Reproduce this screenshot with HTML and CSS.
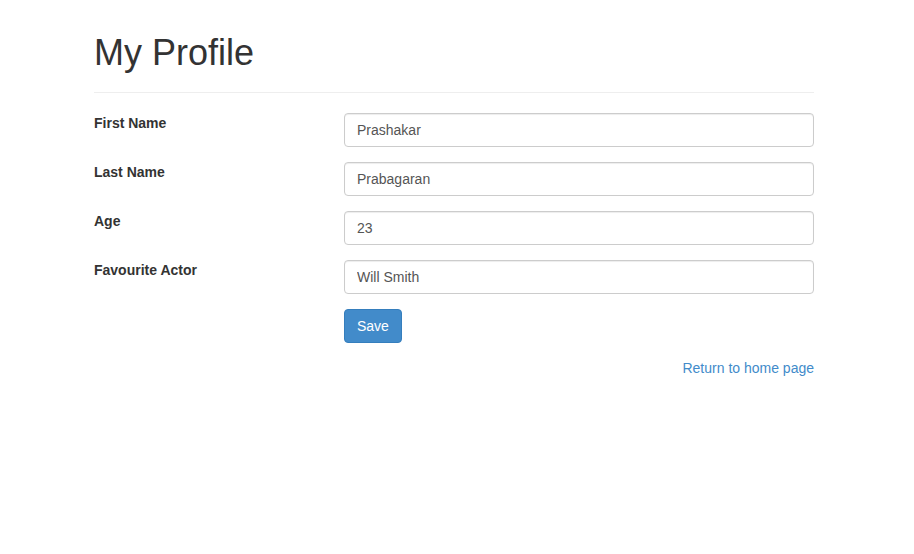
FILE: index.html
```html
<!DOCTYPE html>
<html>
<head>
<meta charset="utf-8">
<link rel="stylesheet" href="styles.css">
</head>
<body>
<div class="container">
  <div class="page-header">
    <h1>My Profile</h1>
  </div>
  <form class="profile-form">
    <div class="form-group">
      <label class="control-label">First Name</label>
      <div class="field"><input class="form-control" type="text" value="Prashakar"></div>
    </div>
    <div class="form-group">
      <label class="control-label">Last Name</label>
      <div class="field"><input class="form-control" type="text" value="Prabagaran"></div>
    </div>
    <div class="form-group">
      <label class="control-label">Age</label>
      <div class="field"><input class="form-control" type="text" value="23"></div>
    </div>
    <div class="form-group">
      <label class="control-label">Favourite Actor</label>
      <div class="field"><input class="form-control" type="text" value="Will Smith"></div>
    </div>
    <div class="form-group">
      <div class="control-label"></div>
      <div class="field"><button type="button" class="btn btn-primary">Save</button></div>
    </div>
  </form>
  <div class="footer-link"><a href="#">Return to home page</a></div>
</div>
</body>
</html>
```
FILE: styles.css
```css
* { box-sizing: border-box; }
html, body {
  margin: 0;
  padding: 0;
  background: #fff;
}
body {
  font-family: "Liberation Sans", Arial, sans-serif;
  font-size: 14px;
  line-height: 1.428571429;
  color: #333;
}
.container {
  width: 720px;
  margin-left: 94px;
}
.page-header {
  margin: 33px 0 20px;
  padding-bottom: 9px;
  border-bottom: 1px solid #eee;
}
.page-header h1 {
  margin: 0 0 10px;
  font-size: 36px;
  font-weight: 500;
  line-height: 1.1;
  color: #333;
}
.form-group {
  display: flex;
  margin-bottom: 15px;
}
.control-label {
  width: 250px;
  flex: none;
  font-weight: bold;
  padding-top: 0;
}
.field {
  flex: 1;
}
.form-control {
  display: block;
  width: 100%;
  height: 34px;
  padding: 6px 12px;
  font-family: inherit;
  font-size: 14px;
  line-height: 1.428571429;
  color: #555;
  background: #fff;
  border: 1px solid #ccc;
  border-radius: 4px;
  box-shadow: inset 0 1px 1px rgba(0,0,0,.075);
  outline: none;
}
.btn {
  display: inline-block;
  padding: 6px 12px;
  font-family: inherit;
  font-size: 14px;
  line-height: 1.428571429;
  border: 1px solid transparent;
  border-radius: 4px;
  cursor: pointer;
}
.btn-primary {
  color: #fff;
  background: #428bca;
  border-color: #357ebd;
}
.footer-link {
  text-align: right;
}
.footer-link a {
  color: #428bca;
  text-decoration: none;
}
```
